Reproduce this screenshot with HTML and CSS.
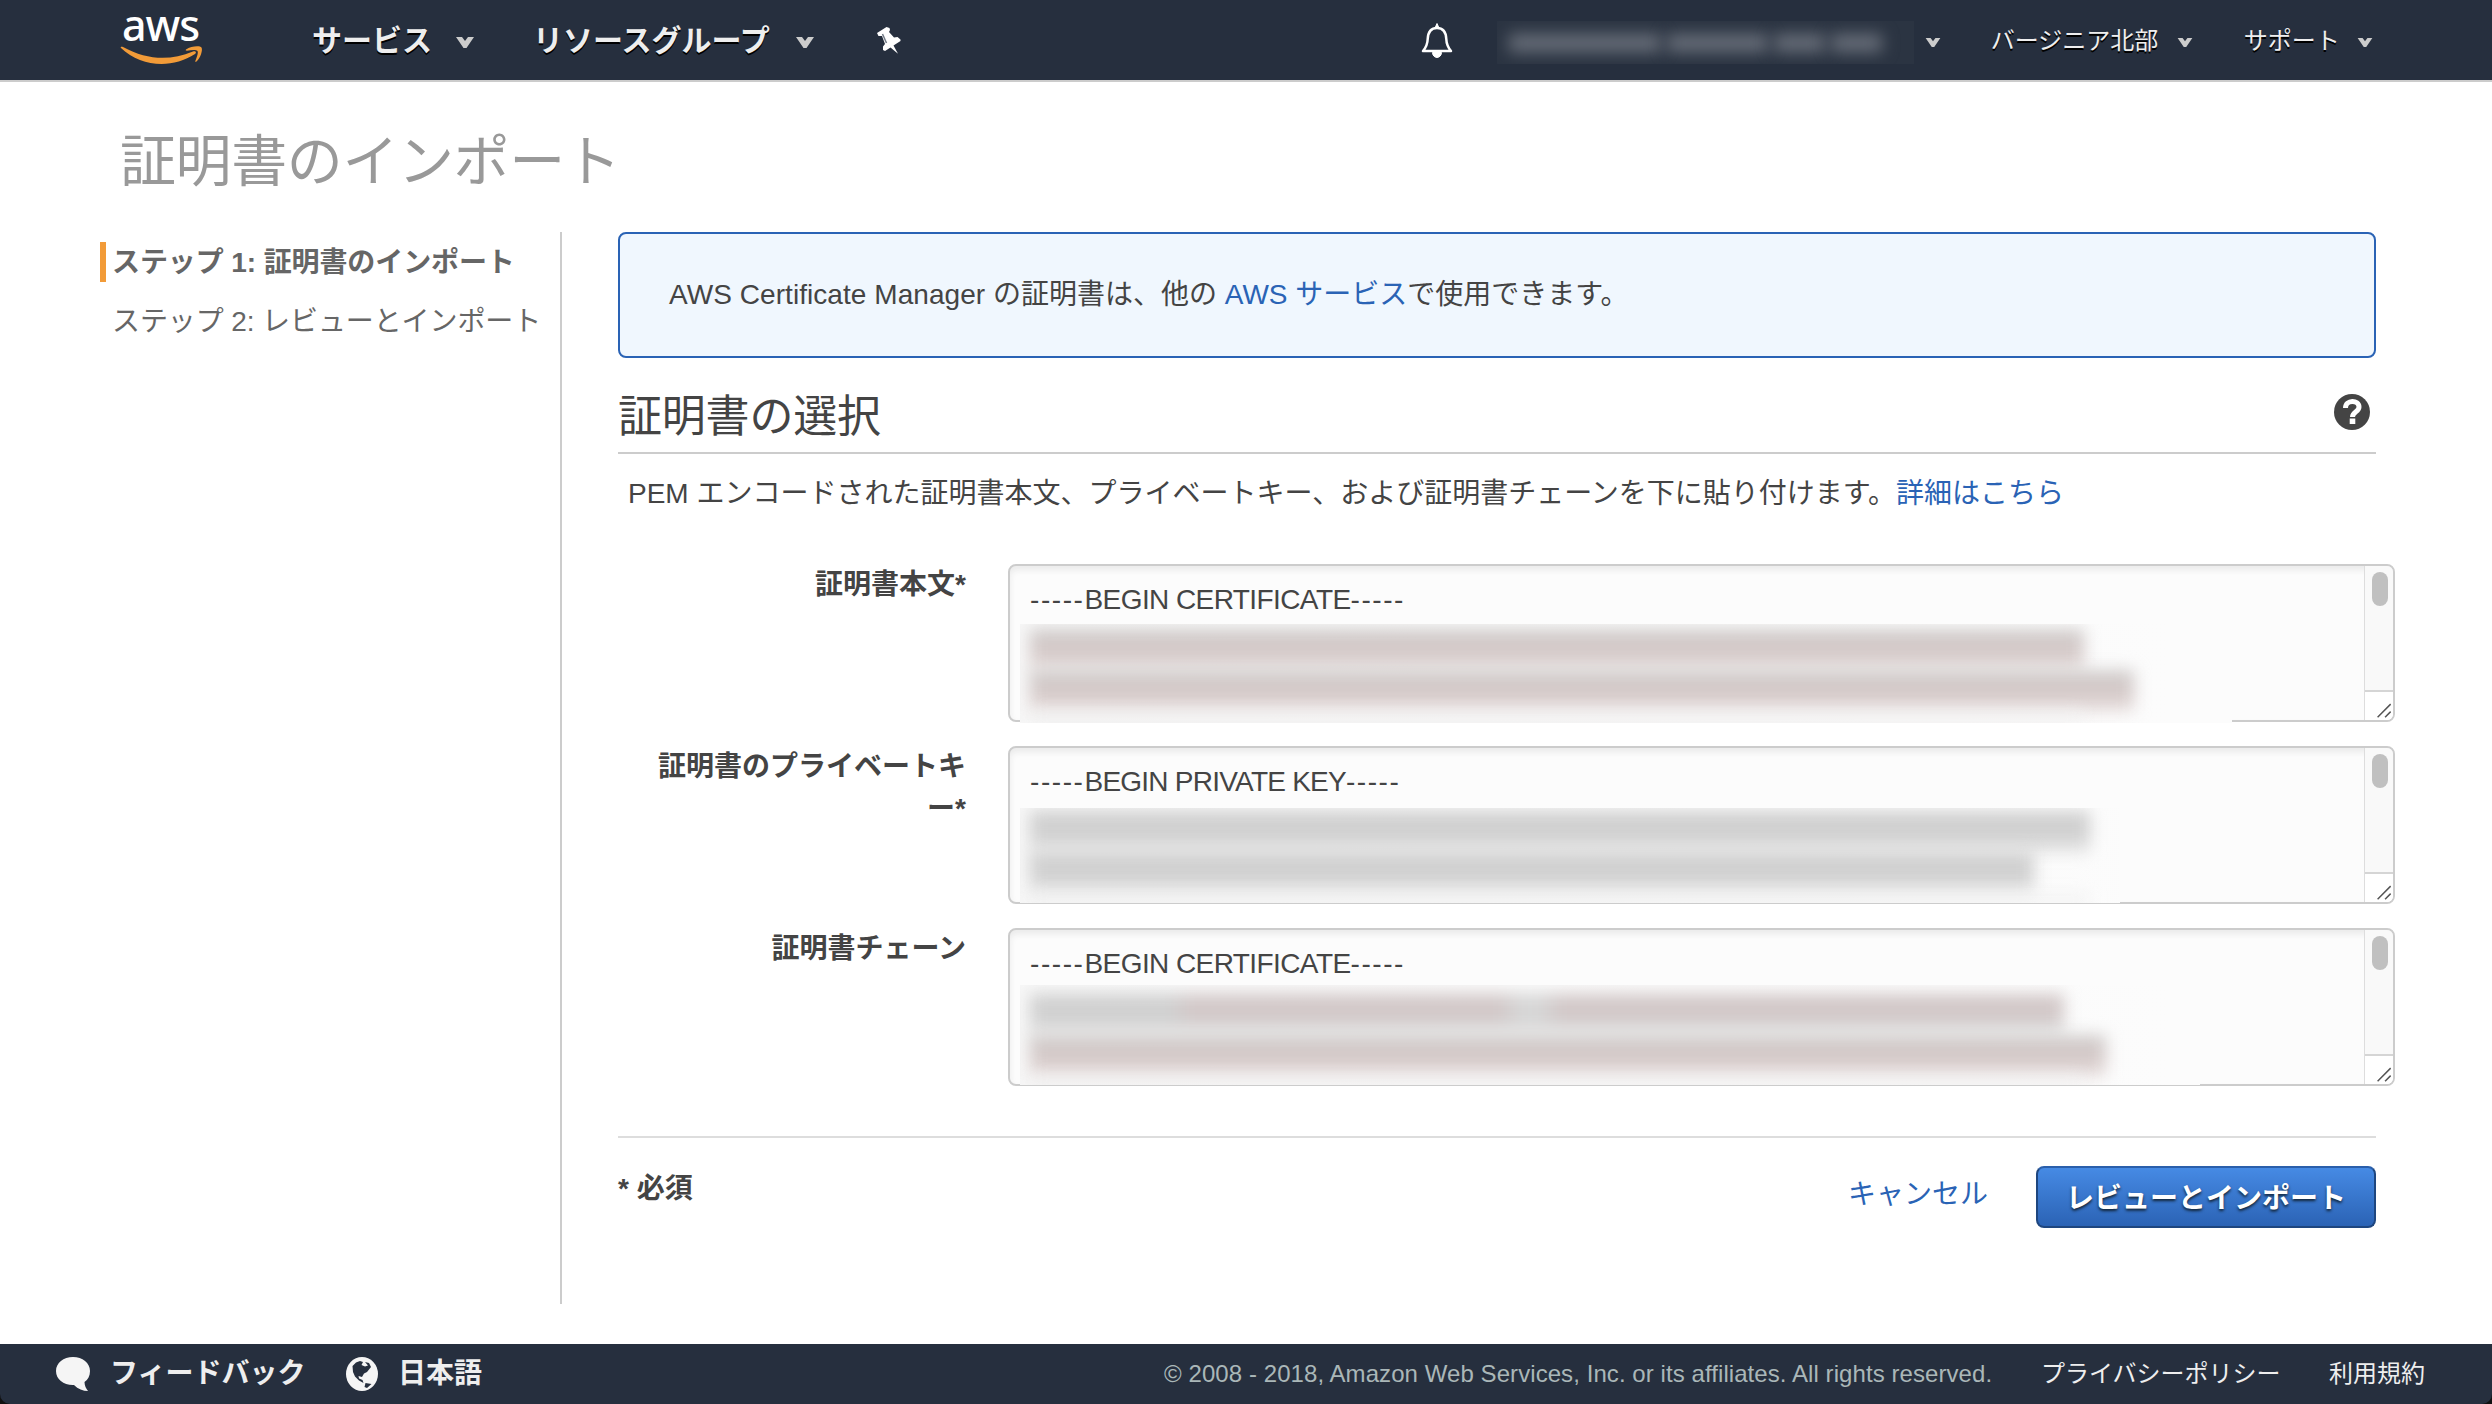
FILE: index.html
```html
<!DOCTYPE html>
<html lang="ja">
<head>
<meta charset="utf-8">
<title>証明書のインポート</title>
<link rel="stylesheet" href="styles.css">
</head>
<body>
<header class="topbar">
  <a class="logo" aria-label="aws">
    <span class="logo-text">aws</span>
    <svg class="logo-smile" viewBox="0 0 82 19" width="82" height="19"><path d="M1 2C0 1 1.500 .3 3 1C27 14 50 15 73 5.500C75.500 4.500 77 6.500 75 8C52 23 21 21 1 2Z" fill="#f29b38"/><path d="M66 3.500C71 0 80 -.5 81.500 1.500C83 4 80.500 12 76.500 15.500C75.500 16.300 75 15.800 75.500 14.500C77 11 78.500 6.500 77.500 5C76 3.500 71 4.200 67 4.700C65.700 4.800 65.300 4 66 3.500Z" fill="#f29b38"/></svg>
  </a>
  <nav class="menu">
    <a class="menu-item"><span>サービス</span><svg class="caret" viewBox="0 0 18 11"><path d="M0 0H6L9 4L12 0H18L10.500 11H7.500Z"/></svg></a>
    <a class="menu-item"><span>リソースグループ</span><svg class="caret" viewBox="0 0 18 11"><path d="M0 0H6L9 4L12 0H18L10.500 11H7.500Z"/></svg></a>
  </nav>
  <svg class="pin" viewBox="0 0 24 27" width="24" height="27"><path d="M0 6L9.500 0L12.500 1L13 3L12 5L17 10.500L20.500 10L23.500 12.500L23.500 14L16.500 18.500L21 26.800L13.500 20.500L8 24L6 23L6 19.500L8 17L5 9L1.500 9Z" fill="#fff"/><path d="M5.500 7L9.500 16" stroke="#737b87" stroke-width="1.500"/></svg>
  <div class="account">
    <svg class="bell" viewBox="0 0 32 36" width="32" height="36"><path d="M16 5C9 5 7 10 6.700 16C6.500 22 5 24.500 2 28H30C27 24.500 25.500 22 25.300 16C25 10 23 5 16 5Z" fill="none" stroke="#fff" stroke-width="2.500" stroke-linejoin="round"/><path d="M14 5L16 .5L18 5ZM11.500 29.500A4.500 5 0 0 0 20.500 29.500Z" fill="#fff" stroke="#fff"/></svg>
    <span class="masked-user"><i></i><i></i><i></i><i></i></span>
    <svg class="caret small" viewBox="0 0 18 11"><path d="M0 0H6L9 4L12 0H18L10.500 11H7.500Z"/></svg>
    <a class="sub-item region">バージニア北部</a>
    <svg class="caret small" viewBox="0 0 18 11"><path d="M0 0H6L9 4L12 0H18L10.500 11H7.500Z"/></svg>
    <a class="sub-item support">サポート</a>
    <svg class="caret small" viewBox="0 0 18 11"><path d="M0 0H6L9 4L12 0H18L10.500 11H7.500Z"/></svg>
  </div>
</header>

<main class="page">
  <h1>証明書のインポート</h1>
  <div class="columns">
    <nav class="steps">
      <div class="step current">ステップ 1: 証明書のインポート</div>
      <div class="step">ステップ 2: レビューとインポート</div>
    </nav>
    <section class="content">
      <div class="notice"><p><span class="latin">AWS Certificate Manager</span> の証明書は、他の <a>AWS サービス</a>で使用できます。</p></div>
      <div class="section-head">
        <h2>証明書の選択</h2>
        <svg class="help" viewBox="0 0 36 36" width="36" height="36"><circle cx="18" cy="18" r="18" fill="#444"/><path d="M11.500 14C11.500 5.500 25 5.500 25 13C25 18 18.500 17.500 18.500 23" fill="none" stroke="#fff" stroke-width="5"/><path d="M15.700 24.500H21.300V30H15.700Z" fill="#fff"/></svg>
      </div>
      <p class="intro">PEM エンコードされた証明書本文、プライベートキー、および証明書チェーンを下に貼り付けます。<a>詳細はこちら</a></p>

      <div class="field">
        <label>証明書本文*</label>
        <div class="box">
          <div class="box-text"><span class="dash">-----</span>BEGIN CERTIFICATE<span class="dash">-----</span></div>
          <div class="mask mask-a"><div class="line pink"></div><div class="line pink"></div><div class="line faint"></div></div>
          <div class="scroll"><div class="thumb"></div><svg class="grip" viewBox="0 0 29 30"><path d="M13 27L27 13M21 27L27 21" stroke="#555" stroke-width="1.600"/></svg></div>
        </div>
      </div>
      <div class="field">
        <label>証明書のプライベートキー*</label>
        <div class="box">
          <div class="box-text key"><span class="dash">-----</span>BEGIN PRIVATE KEY<span class="dash">-----</span></div>
          <div class="mask mask-b"><div class="line"></div><div class="line"></div><div class="line faint"></div></div>
          <div class="scroll"><div class="thumb"></div><svg class="grip" viewBox="0 0 29 30"><path d="M13 27L27 13M21 27L27 21" stroke="#555" stroke-width="1.600"/></svg></div>
        </div>
      </div>
      <div class="field">
        <label>証明書チェーン</label>
        <div class="box">
          <div class="box-text"><span class="dash">-----</span>BEGIN CERTIFICATE<span class="dash">-----</span></div>
          <div class="mask mask-c"><div class="line mixed"></div><div class="line pink"></div><div class="line faint"></div></div>
          <div class="scroll"><div class="thumb"></div><svg class="grip" viewBox="0 0 29 30"><path d="M13 27L27 13M21 27L27 21" stroke="#555" stroke-width="1.600"/></svg></div>
        </div>
      </div>

      <div class="actions">
        <span class="required">* 必須</span>
        <a class="cancel">キャンセル</a>
        <button class="primary" type="button">レビューとインポート</button>
      </div>
    </section>
  </div>
</main>

<div class="footer-wrap">
<footer class="footer">
  <svg class="bubble" viewBox="0 0 34 34" width="34" height="34"><path d="M17 0C7.500 0 0 6 0 14C0 22.500 8 28.500 18 28C22 32 27 34 32 34C30 31.500 28.500 28.500 28.500 25C32 22.500 34 19 34 14C34 6 26.500 0 17 0Z" fill="#f5f5f5"/></svg>
  <a class="foot-main feedback">フィードバック</a>
  <svg class="globe" viewBox="0 0 32 34" width="32" height="34"><ellipse cx="16" cy="17" rx="16" ry="17" fill="#f5f5f5"/><path d="M6.500 9L10 5.500L14 4L17 5L15.500 8L19 9.500L22 8.500L19 5L23 6L25 10L21 15L18 16.500L16 20L12.500 19L13 21.500L16.500 23L17.500 26L13 23.500L9 19.500L7 15ZM19.500 26L25.500 27L21 31L18.500 30Z" fill="#262f3e"/></svg>
  <a class="foot-main">日本語</a>
  <span class="copyright">© 2008 - 2018, Amazon Web Services, Inc. or its affiliates. All rights reserved.</span>
  <a class="foot-link privacy">プライバシーポリシー</a>
  <a class="foot-link">利用規約</a>
</footer>
</div>
</body>
</html>
```
FILE: styles.css
```css
* { box-sizing: border-box; }
body {
  margin: 0;
  width: 2492px;
  height: 1404px;
  overflow: hidden;
  display: flex;
  flex-direction: column;
  background: #fff;
  color: #444;
  font: 28px/42px "Liberation Sans", "Noto Sans CJK JP", sans-serif;
}
h1, h2, p { margin: 0; font-weight: 400; }
a { color: #2a63b5; text-decoration: none; }
svg { display: block; flex: none; }

.topbar {
  flex: none;
  height: 82px;
  display: flex;
  align-items: center;
  padding-left: 120px;
  background: #262f3e;
  border-bottom: 2px solid #ccc;
  color: #eee;
}
.logo { width: 82px; height: 80px; flex: none; }
.logo-text {
  display: block;
  height: 46px;
  padding-left: 2px;
  color: #fff;
  font: 500 43px/50px "Noto Sans", "Open Sans", sans-serif;
  letter-spacing: -1px;
}
.logo-smile { overflow: visible; }
.menu { display: flex; gap: 59px; margin-left: 110px; }
.menu-item {
  display: flex;
  align-items: center;
  color: #eee;
  font-size: 30px;
  font-weight: 700;
  text-shadow: 0 2px 0 #000;
}
.menu-item span { padding-top: 2px; }
.menu-item:last-child .caret { margin-left: 26px; }
.caret { width: 18px; height: 11px; margin: 5px 0 0 24px; fill: #ccc; }
.caret.small { width: 16px; height: 9px; margin: 4px 0 0; }
.pin { margin-left: 63px; }
.account { display: flex; align-items: center; margin-left: 520px; }
.bell { margin-top: 2px; }
.masked-user {
  width: 417px;
  height: 43px;
  margin: 4px 11px 0 44px;
  display: flex;
  gap: 6px;
  padding: 13px 32px 12px 12px;
  overflow: hidden;
  background: #2b3442;
}
.masked-user i { background: #686e79; filter: blur(8px); flex: 1; }
.masked-user i:first-child { flex: 3; }
.masked-user i:nth-child(2) { flex: 2; }
.sub-item { padding-top: 2px; color: #eee; font-size: 24px; text-shadow: 0 2px 0 #000; white-space: nowrap; }
.region { width: 168px; margin: 0 18px 0 50px; }
.support { width: 96px; margin: 0 17px 0 51px; }

.page { flex: 1; display: flex; flex-direction: column; }
h1 { height: 150px; padding: 45px 0 0 120px; font-size: 56px; line-height: 70px; letter-spacing: -.4px; color: #999; }
.columns { display: flex; height: 1072px; }
.steps {
  flex: none;
  width: 562px;
  padding: 10px 0 0 100px;
  border-right: 2px solid #ccc;
  color: #666;
}
.step { height: 40px; line-height: 42px; padding-left: 12px; margin-bottom: 19px; letter-spacing: -.1px; white-space: nowrap; }
.step.current { border-left: 6px solid #f29b38; padding-left: 6px; font-weight: 700; }
.content { flex: none; width: 1850px; padding-left: 56px; }
.latin { letter-spacing: .06px; }
.notice {
  width: 1758px;
  height: 126px;
  padding: 40px 49px;
  border: 2px solid #2a63b5;
  border-radius: 8px;
  background: #f0f7fe;
}
.section-head {
  width: 1758px;
  height: 96px;
  display: flex;
  justify-content: space-between;
  padding: 36px 6px 0 0;
  border-bottom: 2px solid #ccc;
}
h2 { font-size: 44px; line-height: 45px; letter-spacing: -.2px; }
.intro { padding: 19px 0 0 10px; height: 110px; white-space: nowrap; }

.field { display: flex; height: 158px; margin-bottom: 24px; }
.field label {
  flex: none;
  width: 348px;
  margin-right: 42px;
  padding: 0 0 0 36px;
  text-align: right;
  font-weight: 700;
  word-break: break-all;
  line-break: anywhere;
}
.box {
  position: relative;
  width: 1387px;
  height: 158px;
  flex: none;
  padding: 13px 0 0 20px;
  border: 2px solid #ccc;
  border-radius: 8px;
  background: #fcfcfc;
  box-shadow: inset 0 4px 6px #eaeaea;
}
.box-text { letter-spacing: -.58px; }
.box-text.key { letter-spacing: -.76px; }
.box-text .dash { letter-spacing: 1.57px; }
.mask {
  position: absolute;
  left: 10px;
  top: 58px;
  width: 1212px;
  height: 99px;
  overflow: hidden;
  background: linear-gradient(90deg, #f7f7f7, #fcfcfc 1150px);
}
.line {
  width: 1054px;
  height: 29px;
  margin: 5px 0 0 10px;
  background: #d0d0d0;
  box-shadow: 0 12px 0 #e0e0e0;
  filter: blur(8px);
}
.line + .line { margin-top: 12px; }
.line.pink { background: linear-gradient(#cecccb, #d4c9c8 60%); box-shadow: 0 12px 0 #e3d9d8; }
.line + .line.faint { height: 9px; margin-top: 14px; background: #f1f1f1; box-shadow: none; }
.mask-a .line:nth-child(2) { width: 1104px; }
.mask-b { top: 60px; height: 95px; width: 1100px; }
.mask-b .line { width: 1060px; margin-top: 3px; }
.mask-b .line:nth-child(2) { width: 1004px; margin-top: 12px; }
.mask-c { top: 55px; height: 100px; width: 1180px; }
.mask-c .line:first-child { margin-top: 9px; width: 1034px; }
.mask-c .line:nth-child(2) { width: 1076px; }
.line.mixed {
  background: linear-gradient(90deg, #d0d0d0 140px, #d2c8c8 160px, #d2c8c8 470px, #d6d6d6 490px, #d6d6d6 510px, #d2c8c8 530px);
}
.scroll {
  position: absolute;
  top: 0;
  right: 0;
  width: 29px;
  height: 154px;
  border-left: 1px solid #ddd;
  background: #f9f9f9;
  display: flex;
  flex-direction: column;
  justify-content: space-between;
  padding-top: 6px;
  border-radius: 0 6px 6px 0;
}
.thumb { width: 16px; height: 34px; margin-left: 7px; border-radius: 8px; background: #c0c0c0; }
.grip { width: 28px; height: 30px; border-top: 2px solid #d5d5d5; background: #fff; border-radius: 0 0 6px 0; }

.actions {
  width: 1758px;
  height: 94px;
  margin-top: 50px;
  display: flex;
  align-items: flex-start;
  border-top: 2px solid #ddd;
}
.required { margin-top: 30px; font-weight: 700; }
.cancel { margin: 36px 48px 0 auto; }
.primary {
  width: 340px;
  height: 62px;
  margin-top: 28px;
  padding: 3px 0 0;
  border: 2px solid #1e467f;
  border-top-color: #2a5fab;
  border-radius: 8px;
  background: linear-gradient(#468ae4, #2b63b5);
  color: #fff;
  font: inherit;
  font-weight: 700;
  text-shadow: 0 2px 3px #123;
}

.footer-wrap { flex: none; background: #111; }
.footer {
  height: 60px;
  display: flex;
  align-items: center;
  padding-left: 56px;
  background: #262f3e;
  border-radius: 0 0 10px 10px;
}
.foot-main { color: #eee; font-weight: 700; }
.feedback { width: 196px; }
.bubble { margin-right: 20px; }
.globe { margin: 0 20px 0 40px; }
.copyright { width: 877px; margin-left: 682px; color: #aab7b8; font-size: 24px; letter-spacing: .07px; white-space: nowrap; }
.foot-link { color: #eee; font-size: 24px; white-space: nowrap; }
.privacy { width: 288px; }
```
